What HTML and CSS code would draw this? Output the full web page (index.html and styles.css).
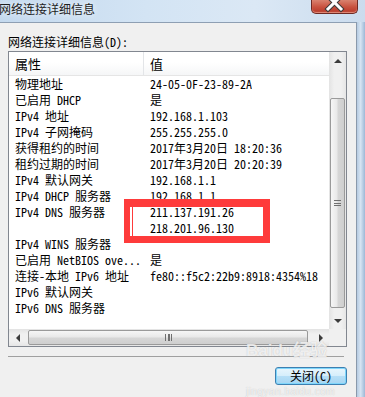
FILE: index.html
```html
<!DOCTYPE html>
<html lang="zh-CN">
<head>
  <meta charset="UTF-8" />
  <title>网络连接详细信息</title>
  <link rel="stylesheet" href="styles.css">
</head>
<body>
  <div class="window">
    <div class="titlebar">
      <span class="title">网络连接详细信息</span>
      <div class="close">
        <svg width="47" height="14" viewBox="0 0 47 14">
          <path d="M17 -4 L30 9 M30 -4 L17 9" stroke="#3a3a3a" stroke-width="5" stroke-linecap="square"/>
          <path d="M17 -4 L30 9 M30 -4 L17 9" stroke="#ffffff" stroke-width="3" stroke-linecap="square"/>
        </svg>
      </div>
    </div>

    <div class="frame">
      <div class="client">
        <div class="label">网络连接详细信息(D):</div>

        <div class="listbox">
          <div class="list-main">
            <div class="list-head">
              <div class="col-prop">属性</div>
              <div class="col-val">值</div>
            </div>
            <div class="row"><div class="col-prop">物理地址</div><div class="col-val">24-05-0F-23-89-2A</div></div>
            <div class="row"><div class="col-prop">已启用 DHCP</div><div class="col-val">是</div></div>
            <div class="row"><div class="col-prop">IPv4 地址</div><div class="col-val">192.168.1.103</div></div>
            <div class="row"><div class="col-prop">IPv4 子网掩码</div><div class="col-val">255.255.255.0</div></div>
            <div class="row"><div class="col-prop">获得租约的时间</div><div class="col-val">2017年3月20日 18:20:36</div></div>
            <div class="row"><div class="col-prop">租约过期的时间</div><div class="col-val">2017年3月20日 20:20:39</div></div>
            <div class="row"><div class="col-prop">IPv4 默认网关</div><div class="col-val">192.168.1.1</div></div>
            <div class="row"><div class="col-prop">IPv4 DHCP 服务器</div><div class="col-val">192.168.1.1</div></div>
            <div class="row"><div class="col-prop">IPv4 DNS 服务器</div><div class="col-val">211.137.191.26</div></div>
            <div class="row"><div class="col-prop"></div><div class="col-val">218.201.96.130</div></div>
            <div class="row"><div class="col-prop">IPv4 WINS 服务器</div><div class="col-val"></div></div>
            <div class="row"><div class="col-prop">已启用 NetBIOS ove...</div><div class="col-val">是</div></div>
            <div class="row"><div class="col-prop">连接-本地 IPv6 地址</div><div class="col-val">fe80::f5c2:22b9:8918:4354%18</div></div>
            <div class="row"><div class="col-prop">IPv6 默认网关</div><div class="col-val"></div></div>
            <div class="row"><div class="col-prop">IPv6 DNS 服务器</div><div class="col-val"></div></div>
          </div>

          <div class="vscroll">
            <div class="arrow-btn"><span class="tri tri-up"></span></div>
            <div class="vtrack">
              <div class="vthumb"><span class="grip-h"></span></div>
            </div>
            <div class="arrow-btn"><span class="tri tri-down"></span></div>
          </div>

          <div class="hscroll">
            <div class="arrow-btn"><span class="tri tri-left"></span></div>
            <div class="htrack">
              <div class="hthumb"><span class="grip-v"></span></div>
            </div>
            <div class="arrow-btn"><span class="tri tri-right"></span></div>
          </div>

          <div class="corner"></div>
        </div>

        <div class="separator"></div>

        <div class="buttons">
          <button class="btn-close">关闭(C)</button>
        </div>
      </div>
      <div class="edge"></div>
    </div>
  </div>

  <div class="mark"></div>

  <div class="watermark">
    <span class="wm-main">Bai<b>du</b>经验</span>
    <span class="wm-sub">jingyan.baidu.com</span>
  </div>
</body>
</html>
```

FILE: styles.css
```css
* {
  box-sizing: border-box;
}

body {
  margin: 0;
  width: 365px;
  height: 397px;
  overflow: hidden;
  background: #f0f0f0;
  font-family: "Noto Sans Mono CJK SC", "Liberation Mono", "Noto Sans CJK SC", monospace;
  font-size: 12px;
  color: #000;
  position: relative;
}

.window {
  display: flex;
  flex-direction: column;
  height: 397px;
}

.titlebar {
  height: 22px;
  display: flex;
  justify-content: space-between;
  align-items: flex-start;
  background: linear-gradient(90deg, #c4d9ee 0%, #d3e4f4 40%, #dbe8f5 70%, #cbdcee 100%);
}

.title {
  font-family: "Noto Sans CJK SC", sans-serif;
  font-size: 12px;
  line-height: 18px;
  margin-left: -1px;
  color: #1e1e1e;
  text-shadow: 0 0 6px #ffffff;
}

.close {
  width: 47px;
  height: 14px;
  margin-right: 7px;
  border: 1px solid #6e2a24;
  border-top: none;
  border-radius: 0 0 5px 5px;
  background: linear-gradient(180deg, #d9826f 0%, #c8513e 55%, #b5382a 100%);
  box-shadow: inset 0 -1px 1px rgba(255, 200, 180, 0.6);
  overflow: hidden;
}

.close svg {
  display: block;
  margin-left: -1px;
}

.frame {
  flex: 1;
  display: flex;
}

.client {
  width: 357px;
  border-top: 1px solid #8e9fb3;
  border-right: 1px solid #8a99ab;
  padding: 0 9px 0 8px;
  background: #f0f0f0;
}

.edge {
  flex: 1;
  background: linear-gradient(90deg, #b6cbe2 0%, #d6e4f2 45%, #9db8d6 100%);
}

.label {
  margin-top: 11px;
  height: 16px;
  line-height: 16px;
  white-space: nowrap;
}

.listbox {
  margin-top: 1px;
  width: 339px;
  height: 296px;
  border: 1px solid #828790;
  background: #fff;
  display: grid;
  grid-template-columns: 320px 17px;
  grid-template-rows: 277px 17px;
}

.list-main {
  overflow: hidden;
  background: #fff;
}

.list-head {
  height: 24px;
  display: flex;
  border-bottom: 1px solid #e5e5e5;
  background: linear-gradient(180deg, #ffffff 0%, #ffffff 45%, #f5f6f7 100%);
  font-size: 13px;
  line-height: 23px;
}

.list-head .col-prop {
  border-right: 1px solid #e3e5e8;
}

.row {
  height: 16px;
  display: flex;
  line-height: 16px;
  white-space: nowrap;
}

.col-prop {
  width: 135px;
  flex: none;
  padding-left: 6px;
  overflow: hidden;
}

.col-val {
  padding-left: 6px;
  overflow: hidden;
}

.vscroll {
  display: flex;
  flex-direction: column;
  background: linear-gradient(90deg, #e3e3e3 0%, #f0f0f0 30%, #f0f0f0 70%, #e6e6e6 100%);
}

.arrow-btn {
  width: 17px;
  height: 17px;
  flex: none;
  display: flex;
  align-items: center;
  justify-content: center;
}

.vtrack {
  flex: 1;
  padding: 29px 1px 4px;
}

.vthumb {
  height: 210px;
  border: 1px solid #9a9a9a;
  border-radius: 2px;
  background: linear-gradient(90deg, #f6f6f6 0%, #e9e9e9 45%, #d6d6d6 55%, #cfcfcf 100%);
  display: flex;
  align-items: center;
  justify-content: center;
}

.grip-h {
  width: 7px;
  height: 6px;
  border-top: 1px solid #6f6f6f;
  border-bottom: 1px solid #6f6f6f;
  background: linear-gradient(180deg, transparent 2px, #6f6f6f 2px, #6f6f6f 3px, transparent 3px);
}

.hscroll {
  display: flex;
  background: linear-gradient(180deg, #e3e3e3 0%, #f0f0f0 30%, #f0f0f0 70%, #e6e6e6 100%);
}

.htrack {
  flex: 1;
  padding: 1px 2px 1px 2px;
}

.hthumb {
  width: 280px;
  height: 15px;
  border: 1px solid #9a9a9a;
  border-radius: 2px;
  background: linear-gradient(180deg, #f6f6f6 0%, #e9e9e9 45%, #d6d6d6 55%, #cfcfcf 100%);
  display: flex;
  align-items: center;
  justify-content: center;
}

.grip-v {
  width: 7px;
  height: 7px;
  border-left: 1px solid #6f6f6f;
  border-right: 1px solid #6f6f6f;
  background: linear-gradient(90deg, transparent 2px, #6f6f6f 2px, #6f6f6f 4px, transparent 4px);
}

.corner {
  background: #f0f0f0;
}

.tri {
  width: 0;
  height: 0;
  border: 4px solid transparent;
}

.tri-up {
  border-bottom: 4px solid #3c3c3c;
  border-top-width: 0;
}

.tri-down {
  border-top: 4px solid #3c3c3c;
  border-bottom-width: 0;
}

.tri-left {
  border-right: 4px solid #3c3c3c;
  border-left-width: 0;
}

.tri-right {
  border-left: 4px solid #3c3c3c;
  border-right-width: 0;
}

.separator {
  margin-top: 9px;
  width: 336px;
  height: 1px;
  background: #a0a0a0;
}

.buttons {
  display: flex;
  justify-content: flex-end;
  margin-top: 10px;
}

.btn-close {
  width: 72px;
  height: 18px;
  padding: 0;
  font-family: "Noto Sans Mono CJK SC", "Noto Sans CJK SC", monospace;
  font-size: 12px;
  line-height: 16px;
  color: #000;
  border: 1px solid #3c7fb1;
  border-radius: 3px;
  background: linear-gradient(180deg, #e8f6fd 0%, #d6eefb 48%, #b6dff7 52%, #a6d5f2 100%);
  box-shadow: inset 0 0 0 1px #7fd6fb;
}

.mark {
  position: absolute;
  left: 124px;
  top: 199px;
  width: 146px;
  height: 44px;
  border: solid #fe3b3b;
  border-width: 8px 7px 7px 9px;
}

.mark::before {
  content: "";
  position: absolute;
  left: -3px;
  top: 0;
  width: 2px;
  height: 100%;
  background: #fff;
}

.watermark {
  position: absolute;
  left: 246px;
  top: 340px;
  display: flex;
  flex-direction: column;
  align-items: flex-start;
  pointer-events: none;
  font-family: "Liberation Sans", "Noto Sans CJK SC", sans-serif;
  color: rgba(255, 255, 255, 0.75);
  text-shadow: 0 0 1px rgba(120, 120, 120, 0.45);
}

.wm-main {
  font-size: 17px;
  font-weight: bold;
  line-height: 22px;
}

.wm-main b {
  font-weight: bold;
}

.wm-sub {
  font-size: 10px;
  line-height: 11px;
  margin-top: 24px;
  letter-spacing: 0.5px;
}
```
